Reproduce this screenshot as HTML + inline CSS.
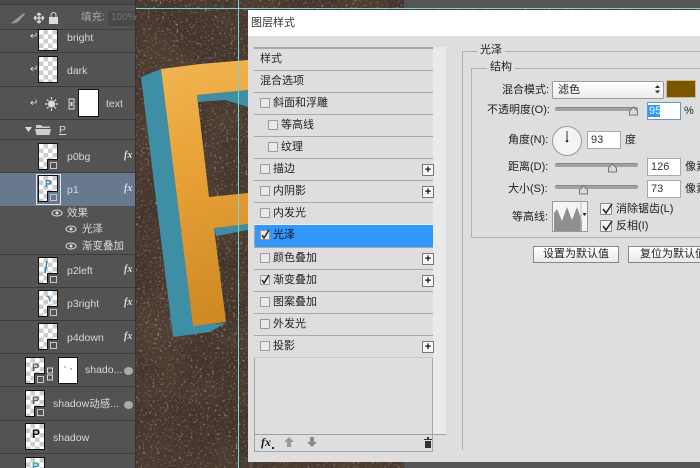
<!DOCTYPE html>
<html lang="zh"><head><meta charset="utf-8"><title>图层样式</title>
<style>
html,body{margin:0;padding:0;width:700px;height:468px;overflow:hidden;background:#3a2c24}
body{font-family:"Liberation Sans","WenQuanYi Zen Hei","Noto Sans CJK SC",sans-serif}
div,span,svg{position:absolute}
#w{left:0;top:0;width:700px;height:468px;overflow:hidden;filter:blur(.3px)}
.t{white-space:nowrap;line-height:14px}
.l{color:#d8d8d8;font-size:10.5px}
.sep{left:0;width:135px;height:1px;background:#3c3c3c}
.th{width:18px;height:25px;border:1px solid #111;background-color:#fff;background-image:conic-gradient(#ccc 25%,#fff 0 50%,#ccc 0 75%,#fff 0);background-size:9px 9px}
.nt{right:-1px;bottom:-1px;width:10px;height:10px;background:#535353;border-left:1px solid #111;border-top:1px solid #111}
.nt:after{content:"";position:absolute;left:2px;top:2px;width:5px;height:5px;border:1px solid #c8c8c8}
.fx{left:124px;color:#ddd;font:italic bold 10px "Liberation Serif",serif}
.r{left:254px;width:179px;height:21px;background:#dedede;border-top:1px solid #a9a9a9;border-bottom:1px solid #eee;box-sizing:content-box}
.rt{font-size:11px;color:#222;top:3px}
.cb{top:5px;width:8px;height:8px;background:#e9e9e9;border:1px solid #999;border-radius:1px}
.pl{left:168px;top:5px;width:10px;height:10px;background:#f5f5f5;border:1px solid #777;color:#111;font:bold 11px/10px "Liberation Sans",sans-serif;text-align:center}
.lb{font-size:11px;color:#222}
.sl{left:555px;width:83px;height:3px;background:#a2a2a2;border-top:1px solid #888;border-radius:2px}
.in{width:32px;height:16px;background:#fff;border:1px solid #aaa;font-size:11px;line-height:16px;color:#333;text-indent:3px}
.btn{height:15px;background:linear-gradient(#fff,#e8e8e8);border:1px solid #888;font-size:11px;line-height:15px;text-align:center;color:#222;white-space:nowrap;overflow:hidden}
.ck{width:10px;height:10px;background:#f2f2f2;border:1px solid #888;border-radius:1px}
</style></head><body><div id="w">

<svg style="left:136px;top:0" width="564" height="468">
<filter id="d" x="0" y="0" width="100%" height="100%"><feTurbulence type="fractalNoise" baseFrequency="0.42" numOctaves="3" seed="7"/><feColorMatrix values="0 0 0 0 0.40  0 0 0 0 0.33  0 0 0 0 0.28  1.8 1.8 0 0 -1.95"/></filter>
<filter id="k" x="0" y="0" width="100%" height="100%"><feTurbulence type="fractalNoise" baseFrequency="0.5" numOctaves="2" seed="21"/><feColorMatrix values="0 0 0 0 0.08  0 0 0 0 0.05  0 0 0 0 0.04  2 2 0 0 -2.05"/></filter>
<filter id="e" x="0" y="0" width="100%" height="100%"><feTurbulence type="fractalNoise" baseFrequency="0.02" numOctaves="2" seed="3"/><feColorMatrix values="0 0 0 0 0.1  0 0 0 0 0.06  0 0 0 0 0.04  1.4 0 0 0 -0.55"/></filter>
<defs><linearGradient id="o" x1="0" y1="0" x2="0.1" y2="1"><stop offset="0" stop-color="#f2b551"/><stop offset=".45" stop-color="#e7a136"/><stop offset="1" stop-color="#cf8a26"/></linearGradient></defs>
<rect width="564" height="468" fill="#43342b"/>
<rect width="564" height="468" filter="url(#e)"/>
<rect width="564" height="468" filter="url(#d)"/>
<rect width="564" height="468" filter="url(#k)"/>
<g transform="translate(-136 0)">
<polygon points="141,77 161,69 193,325 226,323 210,332 173,337" fill="#3e8ea6"/>
<polygon points="197,95 248,90 248,107 225,100 198,102" fill="#3f8ea4"/>
<polygon points="214,228 248,224 248,230 216,236" fill="#3f8ea4"/>
<polygon points="161,69 200,64 248,60 248,90 197,95 209,197 248,193 248,224 214,228 226,322 193,326" fill="url(#o)"/>
</g>
<rect x="268" y="0" width="296" height="8" fill="#555"/>
<rect x="268" y="462" width="296" height="6" fill="#555"/>
<rect x="0" y="8" width="564" height="1" fill="#6fd8d0"/>
<rect x="102" y="0" width="1" height="468" fill="#6fd8d0"/>
</svg>

<!-- Layers panel -->
<div style="left:0;top:0;width:135px;height:468px;background:#535353;border-right:1px solid #333"></div>
<div style="left:0;top:0;width:135px;height:4px;background:#4a4a4a"></div>
<div class="sep" style="top:4px;background:#3c3c3c"></div>
<svg style="left:6px;top:11px" width="55" height="14"><path d="M4 12 C8 11 9 9 10 8 L18 2 L19 3 L13 10 C11 12 7 13 4 12Z" fill="#999"/><path d="M28 7h10M33 2v10M28 7l2-2M28 7l2 2M38 7l-2-2M38 7l-2 2M33 2l-2 2M33 2l2 2M33 12l-2-2M33 12l2-2" stroke="#ddd" stroke-width="1.3" fill="none"/><rect x="43" y="6" width="9" height="7" fill="#ddd"/><path d="M45 6V4a2.500 2.500 0 0 1 5 0V6" stroke="#ddd" fill="none"/></svg>
<div class="t" style="left:81px;top:10px;font-size:10.500px;color:#a5a5a5">填充:</div>
<div style="left:108px;top:11px;width:27px;height:15px;background:#484848"></div>
<div class="t" style="left:111px;top:11px;font-size:10px;color:#777">100%</div>

<div class="sep" style="top:29px"></div><div class="sep" style="top:52px"></div><div class="sep" style="top:86px"></div><div class="sep" style="top:119px"></div><div class="sep" style="top:139px"></div><div class="sep" style="top:172px"></div><div class="sep" style="top:254px"></div><div class="sep" style="top:287px"></div><div class="sep" style="top:320px"></div><div class="sep" style="top:353px"></div><div class="sep" style="top:386px"></div><div class="sep" style="top:420px"></div><div class="sep" style="top:453px"></div>

<div style="left:0;top:173px;width:135px;height:33px;background:#67788f"></div>

<!-- bright -->
<div class="th" style="left:38px;top:29px;height:20px"></div><div class="t l" style="left:67px;top:31px">bright</div>
<div class="t" style="left:30px;top:30px;font-size:10px;color:#ddd">↵</div>
<!-- dark -->
<div class="th" style="left:38px;top:56px"></div><div class="t l" style="left:67px;top:64px">dark</div>
<div class="t" style="left:30px;top:63px;font-size:10px;color:#ddd">↵</div>
<!-- text -->
<div class="t" style="left:30px;top:97px;font-size:10px;color:#ddd">↵</div>
<svg style="left:44px;top:96px" width="34" height="16"><circle cx="7.500" cy="8" r="3.500" fill="#ddd"/><path d="M7.500 1v2.500M7.500 12.500V15M1 8h2.500M11.500 8H14M3 3.500l1.700 1.700M10.300 10.800L12 12.500M12 3.500l-1.700 1.700M4.700 10.800L3 12.500" stroke="#ddd" stroke-width="1.200"/><rect x="25" y="3" width="5" height="4" fill="none" stroke="#ddd"/><rect x="25" y="9" width="5" height="4" fill="none" stroke="#ddd"/><path d="M27.500 6v4" stroke="#ddd"/></svg>
<div style="left:78px;top:89px;width:19px;height:26px;background:#fff;border:1px solid #111"></div>
<div class="t l" style="left:106px;top:97px">text</div>
<!-- group P -->
<svg style="left:24px;top:124px" width="28" height="12"><path d="M1 3h7l-3.500 5z" fill="#ddd"/><path d="M12 1h5l1.500 1.500H26V4H12zM11 5h16l-1.500 6H12.500z" fill="#ccc"/></svg>
<div class="t l" style="left:59px;top:123px;text-decoration:underline">P</div>
<!-- p0bg -->
<div class="th" style="left:38px;top:143px"><div class="nt"></div></div><div class="t l" style="left:67px;top:150px">p0bg</div><div class="t fx" style="top:150px">fx</div>
<!-- p1 -->
<div class="th" style="left:38px;top:175px"><div class="nt" style="background:#67788f"></div></div>
<div style="left:36px;top:174px;width:23px;height:29px;border:1px solid #dfe4ea"></div>
<div class="t" style="left:45px;top:178px;font-size:10px;font-weight:bold;color:#2f7fb0">P</div>
<div class="t l" style="left:67px;top:183px">p1</div><div class="t fx" style="top:183px">fx</div>
<!-- effects -->
<svg style="left:0;top:0;width:135px;height:468px"><g fill="none" stroke="#ddd"><ellipse cx="57" cy="213" rx="5" ry="3"/><ellipse cx="71" cy="229" rx="5" ry="3"/><ellipse cx="71" cy="246" rx="5" ry="3"/></g><g fill="#ddd"><circle cx="57" cy="213" r="1.500"/><circle cx="71" cy="229" r="1.500"/><circle cx="71" cy="246" r="1.500"/></g></svg>
<div class="t" style="left:67px;top:206px;font-size:10.500px;color:#ddd">效果</div>
<div class="t" style="left:82px;top:222px;font-size:10.500px;color:#ddd">光泽</div>
<div class="t" style="left:82px;top:239px;font-size:10.500px;color:#ddd">渐变叠加</div>
<!-- p2 p3 p4 -->
<div class="th" style="left:38px;top:257px"><div class="nt"></div><svg style="left:3px;top:2px" width="10" height="16"><path d="M5 1L3 13" stroke="#2f86b0" stroke-width="1.500"/></svg></div><div class="t l" style="left:67px;top:264px">p2left</div><div class="t fx" style="top:264px">fx</div>
<div class="th" style="left:38px;top:290px"><div class="nt"></div><svg style="left:3px;top:2px" width="12" height="16"><path d="M4 3q4 0 4 6" stroke="#2f86b0" fill="none"/></svg></div><div class="t l" style="left:67px;top:297px">p3right</div><div class="t fx" style="top:297px">fx</div>
<div class="th" style="left:38px;top:323px"><div class="nt"></div></div><div class="t l" style="left:67px;top:331px">p4down</div><div class="t fx" style="top:331px">fx</div>
<!-- shadow rows -->
<div class="th" style="left:25px;top:357px"><div class="nt"></div><div class="t" style="left:6px;top:3px;font-size:11px;font-weight:bold;color:#666">P</div></div>
<svg style="left:46px;top:367px" width="8" height="14"><rect x="1.500" y="1" width="5" height="5" fill="none" stroke="#ddd"/><rect x="1.500" y="8" width="5" height="5" fill="none" stroke="#ddd"/></svg>
<div style="left:58px;top:357px;width:18px;height:25px;background:#fff;border:1px solid #111"></div>
<div style="left:64px;top:366px;width:2px;height:2px;background:#ccc"></div><div style="left:70px;top:368px;width:2px;height:2px;background:#bbb"></div>
<div class="t l" style="left:85px;top:363px">shado...</div>
<div style="left:124px;top:367px;width:9px;height:8px;border-radius:50%;background:#aaa"></div>
<div class="th" style="left:25px;top:390px"><div class="nt"></div><div class="t" style="left:6px;top:3px;font-size:11px;font-weight:bold;color:#666">P</div></div>
<div class="t l" style="left:53px;top:397px">shadow动感...</div>
<div style="left:124px;top:401px;width:9px;height:8px;border-radius:50%;background:#aaa"></div>
<div class="th" style="left:25px;top:423px"><div class="t" style="left:6px;top:3px;font-size:12px;font-weight:bold;color:#111">P</div></div>
<div class="t l" style="left:53px;top:431px">shadow</div>
<div class="th" style="left:25px;top:457px"><div class="t" style="left:6px;top:2px;font-size:11px;font-weight:bold;color:#3a9ab0">P</div></div>

<!-- Dialog -->
<div style="left:248px;top:10px;width:452px;height:452px;background:#dedede"></div>
<div style="left:248px;top:10px;width:452px;height:26px;background:#fff"></div>
<div class="t" style="left:251px;top:16px;font-size:11px;color:#333">图层样式</div>
<div style="left:254px;top:47px;width:179px;height:405px;border:1px solid #a5a5a5;box-sizing:border-box;background:#dedede"></div>
<div style="left:433px;top:47px;width:13px;height:387px;background:#eaeaea"></div>

<div class="r" style="top:48px"><div class="t rt" style="left:6px">样式</div></div>
<div class="r" style="top:70px"><div class="t rt" style="left:6px">混合选项</div></div>
<div class="r" style="top:92px"><div class="cb" style="left:6px"></div><div class="t rt" style="left:19px">斜面和浮雕</div></div>
<div class="r" style="top:114px"><div class="cb" style="left:14px"></div><div class="t rt" style="left:27px">等高线</div></div>
<div class="r" style="top:136px"><div class="cb" style="left:14px"></div><div class="t rt" style="left:27px">纹理</div></div>
<div class="r" style="top:158px"><div class="cb" style="left:6px"></div><div class="t rt" style="left:19px">描边</div><div class="pl">+</div></div>
<div class="r" style="top:180px"><div class="cb" style="left:6px"></div><div class="t rt" style="left:19px">内阴影</div><div class="pl">+</div></div>
<div class="r" style="top:202px"><div class="cb" style="left:6px"></div><div class="t rt" style="left:19px">内发光</div></div>
<div style="left:255px;top:225px;width:178px;height:22px;background:#3398fb"></div>
<div class="cb" style="left:260px;top:230px"></div><div class="t rt" style="left:273px;top:228px;color:#111">光泽</div>
<svg style="left:260px;top:228px" width="12" height="12"><path d="M2 7l2 3 5-8" stroke="#222" stroke-width="1.500" fill="none"/></svg>
<div class="r" style="top:247px"><div class="cb" style="left:6px"></div><div class="t rt" style="left:19px">颜色叠加</div><div class="pl">+</div></div>
<div class="r" style="top:269px"><div class="cb" style="left:6px"></div><svg style="left:6px;top:3px" width="12" height="12"><path d="M2 7l2 3 5-8" stroke="#222" stroke-width="1.500" fill="none"/></svg><div class="t rt" style="left:19px">渐变叠加</div><div class="pl">+</div></div>
<div class="r" style="top:291px"><div class="cb" style="left:6px"></div><div class="t rt" style="left:19px">图案叠加</div></div>
<div class="r" style="top:313px"><div class="cb" style="left:6px"></div><div class="t rt" style="left:19px">外发光</div></div>
<div class="r" style="top:335px"><div class="cb" style="left:6px"></div><div class="t rt" style="left:19px">投影</div><div class="pl">+</div></div>
<div style="left:254px;top:357px;width:179px;height:1px;background:#c9c9c9"></div>

<div style="left:255px;top:434px;width:191px;height:1px;background:#a0a0a0"></div>
<div class="t" style="left:261px;top:435px;font:italic bold 12px/14px 'Liberation Serif',serif;color:#222">fx</div>
<svg style="left:272px;top:436px" width="170" height="14"><rect x="0" y="11" width="2" height="2" fill="#222"/><path d="M17 1l5 5h-3v5h-4V6h-3z" fill="#999"/><path d="M38 1h4v5h3l-5 5-5-5h3z" fill="#888"/><path d="M152 3h8v1h-8zM155 1h2v2h-2zM153 5h6v7h-6z" fill="#333"/></svg>

<!-- Right side -->
<div style="left:462px;top:51px;width:238px;height:399px;border-left:1px solid #b0b0b0;border-top:1px solid #b0b0b0;box-sizing:border-box"></div>
<div class="t" style="left:477px;top:43px;padding:0 3px;background:#dedede;font-size:11px;color:#222">光泽</div>
<div style="left:471px;top:68px;width:229px;height:170px;border-left:1px solid #b0b0b0;border-top:1px solid #b0b0b0;border-bottom:1px solid #b0b0b0;box-sizing:border-box"></div>
<div class="t" style="left:487px;top:60px;padding:0 3px;background:#dedede;font-size:11px;color:#222">结构</div>

<div class="t lb" style="left:502px;top:83px">混合模式:</div>
<div style="left:552px;top:81px;width:110px;height:16px;background:linear-gradient(#fff,#ececec);border:1px solid #999;border-radius:2px"></div>
<div class="t lb" style="left:558px;top:83px">滤色</div>
<svg style="left:654px;top:84px" width="8" height="11"><path d="M1 4l2.500-3L6 4zM1 6.500l2.500 3L6 6.500z" fill="#333"/></svg>
<div style="left:666px;top:80px;width:30px;height:18px;background:#7b5500;border:1px solid #c9b79a;box-sizing:border-box"></div>

<div class="t lb" style="left:487px;top:103px">不透明度(O):</div>
<div class="sl" style="top:107px"></div>
<svg style="left:628px;top:106px" width="11" height="10"><path d="M5.500 1l4 4v4h-8V5z" fill="#d8d8d8" stroke="#777"/></svg>
<div class="in" style="left:647px;top:102px;border-color:#6d95c4"></div>
<div style="left:648px;top:105px;width:12px;height:12px;background:#3398fb"></div>
<div class="t" style="left:649px;top:104px;font-size:11px;color:#dff">95</div>
<div class="t lb" style="left:684px;top:104px">%</div>

<div class="t lb" style="left:508px;top:133px">角度(N):</div>
<svg style="left:551px;top:125px" width="32" height="32"><circle cx="16" cy="16" r="14.500" fill="#f4f4f4" stroke="#999"/><path d="M16 6v10" stroke="#333"/><circle cx="16" cy="16" r="1.300" fill="#333"/></svg>
<div class="in" style="left:587px;top:131px">93</div>
<div class="t lb" style="left:625px;top:133px">度</div>

<div class="t lb" style="left:508px;top:160px">距离(D):</div>
<div class="sl" style="top:163px"></div>
<svg style="left:607px;top:163px" width="11" height="10"><path d="M5.500 1l4 4v4h-8V5z" fill="#d8d8d8" stroke="#777"/></svg>
<div class="in" style="left:647px;top:158px">126</div>
<div class="t lb" style="left:685px;top:160px">像素</div>

<div class="t lb" style="left:508px;top:182px">大小(S):</div>
<div class="sl" style="top:185px"></div>
<svg style="left:578px;top:185px" width="11" height="10"><path d="M5.500 1l4 4v4h-8V5z" fill="#d8d8d8" stroke="#777"/></svg>
<div class="in" style="left:647px;top:180px">73</div>
<div class="t lb" style="left:685px;top:182px">像素</div>

<div class="t lb" style="left:512px;top:210px">等高线:</div>
<svg style="left:552px;top:201px" width="36" height="31"><rect x=".5" y=".5" width="35" height="30" fill="#f4f4f4" stroke="#999"/><path d="M2 30V12L5 8L10 20L15 6L20 19L25 6L30 20V30Z" fill="#8f8f8f"/><path d="M29 1v29" stroke="#bbb"/><path d="M30.500 12h4l-2 3z" fill="#222"/></svg>

<div class="ck" style="left:600px;top:203px"></div><svg style="left:601px;top:202px" width="13" height="13"><path d="M2 7l3 4 6-9" stroke="#222" stroke-width="1.500" fill="none"/></svg><div class="t lb" style="left:616px;top:202px">消除锯齿(L)</div>
<div class="ck" style="left:600px;top:220px"></div><svg style="left:601px;top:219px" width="13" height="13"><path d="M2 7l3 4 6-9" stroke="#222" stroke-width="1.500" fill="none"/></svg><div class="t lb" style="left:616px;top:219px">反相(I)</div>

<div class="btn" style="left:533px;top:246px;width:84px">设置为默认值</div>
<div class="btn" style="left:628px;top:246px;width:90px;text-align:left;text-indent:11px">复位为默认值</div>

</div></body></html>
